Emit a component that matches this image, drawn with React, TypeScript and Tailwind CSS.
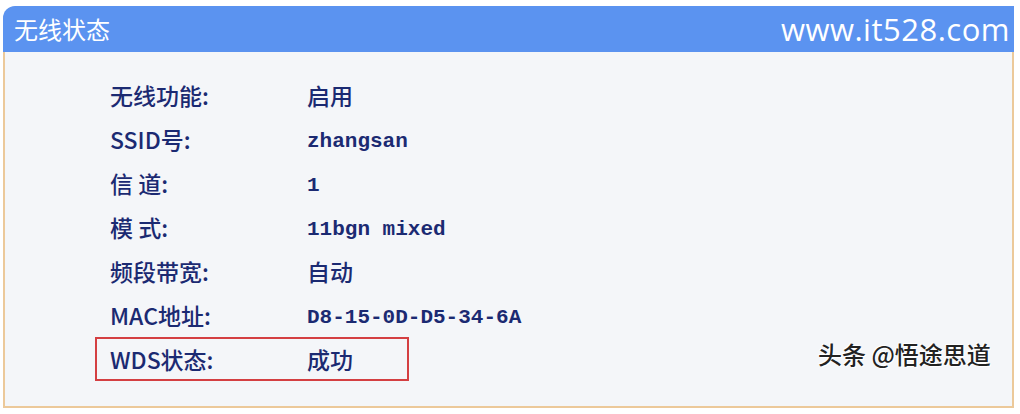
import React from "react";

const rows: { label: string; value: string; mono?: boolean; highlight?: boolean }[] = [
  { label: "无线功能:", value: "启用" },
  { label: "SSID号:", value: "zhangsan", mono: true },
  { label: "信 道:", value: "1", mono: true },
  { label: "模 式:", value: "11bgn mixed", mono: true },
  { label: "频段带宽:", value: "自动" },
  { label: "MAC地址:", value: "D8-15-0D-D5-34-6A", mono: true },
  { label: "WDS状态:", value: "成功", highlight: true },
];

export default function App() {
  return (
    <div className="relative w-[1020px] h-[414px] bg-white pt-[6px] pl-[3px] overflow-hidden">
      <div className="w-[1011px] h-[46px] rounded-tl-[12px] bg-[#5b93f0] flex items-center justify-between pl-[11px] pr-[4px]">
        <span className="text-white text-[24px] leading-none font-['Noto_Sans_CJK_SC',sans-serif]">
          无线状态
        </span>
        <span className="text-white text-[31px] leading-none tracking-[0.5px] font-['Open_Sans','Noto_Sans',sans-serif]">
          www.it528.com
        </span>
      </div>
      <div className="w-[1011px] h-[356px] border-2 border-t-0 border-[#ecc99a] bg-[#f4f6f9] pt-[21px]">
        {rows.map((r) => (
          <div
            key={r.label}
            className={`ml-[90px] w-[314px] h-[44px] flex items-center pl-[13px] border-2 whitespace-nowrap ${
              r.highlight ? "border-[#d43f42]" : "border-transparent"
            }`}
          >
            <span className="w-[197px] shrink-0 text-[23px] leading-none font-medium text-[#1b2a72] font-['Noto_Sans_CJK_SC',sans-serif]">
              {r.label}
            </span>
            {r.mono ? (
              <span className="shrink-0 pt-[5px] text-[21px] leading-none font-bold text-[#1b2a72] font-['Liberation_Mono','DejaVu_Sans_Mono',monospace]">
                {r.value}
              </span>
            ) : (
              <span className="shrink-0 text-[23px] leading-none font-medium text-[#1b2a72] font-['Noto_Sans_CJK_SC',sans-serif]">
                {r.value}
              </span>
            )}
          </div>
        ))}
      </div>
      <div className="absolute left-[818px] top-[342px] text-[24px] leading-none font-medium text-[#222222] font-['Noto_Sans_CJK_SC',sans-serif] [text-shadow:1px_1px_0_#ffffff,-1px_-1px_0_#ffffff]">
        头条 @悟途思道
      </div>
    </div>
  );
}
